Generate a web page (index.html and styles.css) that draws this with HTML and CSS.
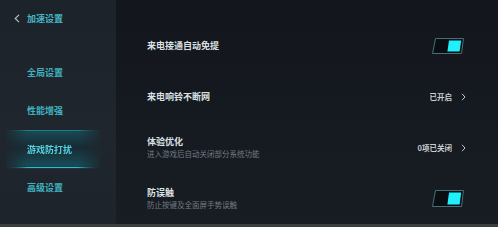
FILE: index.html
```html
<!DOCTYPE html>
<html lang="zh">
<head>
<meta charset="utf-8">
<link rel="stylesheet" href="styles.css">
</head>
<body>
<div class="app">
  <aside class="sidebar">
    <div class="header">
      <svg class="back" width="6" height="9" viewBox="0 0 6 9"><path d="M5 0.8 L1.2 4.5 L5 8.2" fill="none" stroke="#b9c3c8" stroke-width="1.1"/></svg>
      <span>加速设置</span>
    </div>
    <nav class="nav">
      <div class="nav-item">全局设置</div>
      <div class="nav-item">性能增强</div>
      <div class="nav-item active">游戏防打扰</div>
      <div class="nav-item">高级设置</div>
    </nav>
  </aside>
  <main class="main">
    <div class="row">
      <div class="texts"><div class="title">来电接通自动免提</div></div>
      <svg class="toggle" width="33" height="16" viewBox="0 0 33 16"><polygon points="3.5,0.5 31.5,0.5 29.5,15.5 0.5,15.5" fill="#0a0d11" stroke="#41727a" stroke-width="1"/><polygon points="17,2.5 29.2,2.5 27.6,13.5 15.4,13.5" fill="#1ff0fb"/></svg>
    </div>
    <div class="row">
      <div class="texts"><div class="title">来电响铃不断网</div></div>
      <div class="value">已开启<svg class="chev" width="5" height="8" viewBox="0 0 5 8"><path d="M1 0.8 L4 4 L1 7.2" fill="none" stroke="#c3c9cc" stroke-width="1"/></svg></div>
    </div>
    <div class="row">
      <div class="texts"><div class="title">体验优化</div><div class="sub">进入游戏后自动关闭部分系统功能</div></div>
      <div class="value">0项已关闭<svg class="chev" width="5" height="8" viewBox="0 0 5 8"><path d="M1 0.8 L4 4 L1 7.2" fill="none" stroke="#c3c9cc" stroke-width="1"/></svg></div>
    </div>
    <div class="row">
      <div class="texts"><div class="title">防误触</div><div class="sub">防止按键及全面屏手势误触</div></div>
      <svg class="toggle" width="33" height="17" viewBox="0 0 33 17"><polygon points="3.5,0.5 31.5,0.5 29.5,16.5 0.5,16.5" fill="#0a0d11" stroke="#41727a" stroke-width="1"/><polygon points="17,2.5 29.2,2.5 27.6,14.5 15.4,14.5" fill="#1ff0fb"/></svg>
    </div>
  </main>
</div>
<div class="bottom"></div>
</body>
</html>
```

FILE: styles.css
```css
html, body {
  margin: 0;
  padding: 0;
}
body {
  width: 498px;
  height: 227px;
  overflow: hidden;
  background: #15191f;
  font-family: "Noto Sans CJK SC", "Noto Sans", sans-serif;
  display: flex;
  flex-direction: column;
}
.app {
  display: flex;
  height: 224px;
}
.sidebar {
  width: 116px;
  flex: none;
  background: linear-gradient(180deg, #1d232a 0%, #20262d 60%, #1e242b 100%);
  display: flex;
  flex-direction: column;
}
.header {
  height: 36px;
  display: flex;
  align-items: center;
  padding-left: 14px;
  gap: 7px;
  color: #45b8c6;
  font-size: 9px;
  font-weight: 700;
}
.back {
  display: block;
}
.nav {
  padding-top: 17px;
  display: flex;
  flex-direction: column;
}
.nav-item {
  height: 38.5px;
  display: flex;
  align-items: center;
  padding-left: 27px;
  font-size: 9px;
  font-weight: 700;
  color: #3fb3c1;
}
.nav-item.active {
  color: #54d3e2;
  margin: 0 16px 0 6px;
  padding-left: 21px;
  background:
    linear-gradient(90deg, rgba(40,190,210,0) 0%, rgba(40,190,210,0.45) 25%, rgba(40,190,210,0.45) 75%, rgba(40,190,210,0) 100%) top / 100% 1px no-repeat,
    linear-gradient(90deg, rgba(40,190,210,0) 0%, rgba(50,210,230,0.85) 25%, rgba(50,210,230,0.85) 75%, rgba(40,190,210,0) 100%) 0 calc(100% - 1px) / 100% 1px no-repeat,
    linear-gradient(180deg, rgba(20,110,125,0.5) 0%, rgba(10,55,66,0.35) 45%, rgba(18,105,120,0.55) 90%, rgba(18,105,120,0.2) 100%);
  -webkit-mask-image: linear-gradient(90deg, rgba(0,0,0,0.15) 0%, #000 22%, #000 78%, rgba(0,0,0,0.15) 100%);
}
.main {
  flex: 1;
  background: linear-gradient(180deg, #13161c 0%, #151920 50%, #181c23 100%);
  padding: 20px 32px 0 31px;
  display: flex;
  flex-direction: column;
}
.row {
  height: 51px;
  display: flex;
  align-items: center;
  justify-content: space-between;
}
.texts {
  display: flex;
  flex-direction: column;
}
.title {
  font-size: 9px;
  line-height: 12px;
  font-weight: 700;
  color: #dce1e4;
}
.sub {
  font-size: 7.5px;
  line-height: 11px;
  color: #737b82;
}
.value {
  display: flex;
  align-items: center;
  gap: 9px;
  font-size: 7.5px;
  font-weight: 700;
  color: #c9ced1;
}
.chev {
  display: block;
}
.toggle {
  display: block;
  margin-right: 1px;
}
.bottom {
  height: 3px;
  background: #3a3f40;
}
```
